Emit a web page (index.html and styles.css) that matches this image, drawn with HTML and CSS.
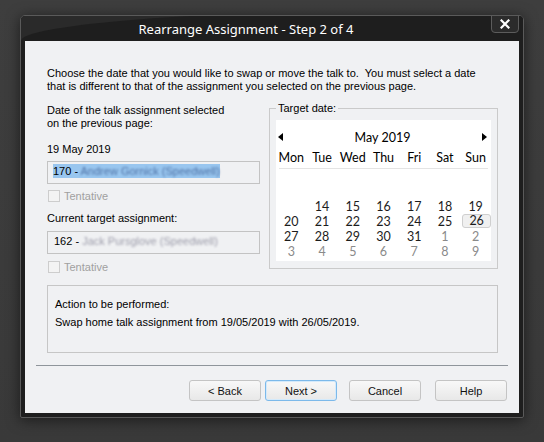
FILE: index.html
```html
<!DOCTYPE html>
<html lang="en">
<head>
    <meta charset="UTF-8">
    <title>Rearrange Assignment - Step 2 of 4</title>
    <link rel="stylesheet" href="styles.css">
</head>
<body>
<div class="window">
    <div class="titlebar">
        <span class="title">Rearrange Assignment - Step 2 of 4</span>
        <button class="close" title="Close">
            <svg width="10" height="10" viewBox="0 0 10 10"><path d="M1.5 1.5 L8.5 8.5 M8.5 1.5 L1.5 8.5" stroke="#fff" stroke-width="2.2" stroke-linecap="square"/></svg>
        </button>
    </div>

    <div class="client">
        <p class="intro">Choose the date that you would like to swap or move the talk to.&nbsp; You must select a date<br>that is different to that of the assignment you selected on the previous page.</p>

        <div class="columns">
            <div class="left">
                <p class="label">Date of the talk assignment selected<br>on the previous page:</p>
                <p class="date">19 May 2019</p>
                <div class="textbox"><span class="sel">170 - <span class="blur blur-sel">Andrew Gornick (Speedwell)</span></span></div>
                <label class="check"><span class="box"></span>Tentative</label>

                <p class="label label-target">Current target assignment:</p>
                <div class="textbox textbox-target">162 - <span class="blur">Jack Pursglove (Speedwell)</span></div>
                <label class="check check-target"><span class="box"></span>Tentative</label>
            </div>

            <fieldset class="group">
                <legend>Target date:</legend>
                <div class="calendar">
                    <div class="cal-head">
                        <svg class="arrow" width="5" height="8" viewBox="0 0 5 8"><polygon points="5,0 5,8 0,4" fill="#000"/></svg>
                        <span class="month">May 2019</span>
                        <svg class="arrow" width="5" height="8" viewBox="0 0 5 8"><polygon points="0,0 0,8 5,4" fill="#000"/></svg>
                    </div>
                    <div class="cal-days">
                        <span>Mon</span><span>Tue</span><span>Wed</span><span>Thu</span><span>Fri</span><span>Sat</span><span>Sun</span>
                    </div>
                    <div class="cal-grid" id="calGrid"></div>
                </div>
            </fieldset>
        </div>

        <div class="action">
            <p>Action to be performed:</p>
            <p>Swap home talk assignment from 19/05/2019 with 26/05/2019.</p>
        </div>

        <div class="footer">
            <div class="buttons">
                <button class="btn">&lt; Back</button>
                <button class="btn btn-default">Next &gt;</button>
                <button class="btn btn-cancel">Cancel</button>
                <button class="btn btn-help">Help</button>
            </div>
        </div>
    </div>
</div>

<script>
    // May 2019 calendar, earlier dates are hidden
    const grid = document.getElementById('calGrid');
    const cells = [];
    for (let i = 0; i < 15; i++) cells.push({ text: '' });
    for (let d = 14; d <= 31; d++) cells.push({ text: d, cls: d === 26 ? 'selected' : '' });
    for (let d = 1; d <= 9; d++) cells.push({ text: d, cls: 'other' });

    cells.forEach(c => {
        const cell = document.createElement('span');
        cell.className = 'day ' + (c.cls || '');
        cell.innerHTML = c.text === '' ? '' : '<span>' + c.text + '</span>';
        grid.appendChild(cell);
    });
</script>
</body>
</html>
```

FILE: styles.css
```css
* {
    box-sizing: border-box;
}

body {
    margin: 0;
    width: 544px;
    height: 442px;
    overflow: hidden;
    background: linear-gradient(180deg, #3e3e3e, #393939);
    font-family: 'Liberation Sans', Arial, sans-serif;
    font-size: 11px;
    color: #000;
}

p {
    margin: 0;
    line-height: 13px;
}

.window {
    margin: 15px 0 0 20px;
    width: 504px;
    height: 403px;
    border: 1px solid #5a5a5a;
    border-radius: 5px 5px 2px 2px;
    background: #1e1e1e;
    padding: 0 4px 4px 4px;
    box-shadow: 0 2px 14px rgba(0, 0, 0, 0.55);
}

.titlebar {
    position: relative;
    display: flex;
    align-items: flex-start;
    height: 25px;
    margin: 0 -4px;
    overflow: hidden;
    border-radius: 4px 4px 0 0;
    background: #2a2a2a;
}

.titlebar::before {
    content: '';
    position: absolute;
    left: 0;
    top: -7px;
    width: 900px;
    height: 64px;
    border-radius: 50%;
    background: #1e1e1e;
}

.title {
    position: relative;
    flex: 1;
    text-align: center;
    padding-right: 20px;
    line-height: 26px;
    color: #fff;
    font-family: 'Noto Sans', 'Open Sans', sans-serif;
    font-size: 13px;
}

.close {
    position: relative;
    width: 28px;
    height: 18px;
    margin: -1px 4px 0 0;
    padding: 0;
    border: 1px solid #5c5c5c;
    border-radius: 0 0 4px 4px;
    background: #2b2b2b;
    display: flex;
    align-items: center;
    justify-content: center;
}

.client {
    height: 372px;
    background: #f0f1f3;
    padding: 26px 20px 0 22px;
}

.columns {
    display: flex;
    align-items: flex-start;
    gap: 9px;
    margin-top: 9px;
}

.left {
    width: 213px;
    padding-top: 2px;
}

.date {
    margin-top: 13px;
}

.textbox {
    height: 23px;
    margin-top: 5px;
    border: 1px solid #c3c3c3;
    padding: 2px 0 0 5px;
    line-height: 14px;
    white-space: nowrap;
    overflow: hidden;
}

.sel {
    display: inline-block;
    background: #99c6ef;
    line-height: 14px;
}

.blur {
    color: #9c9caa;
    filter: blur(1.3px);
}

.blur-sel {
    color: #4f72a6;
}

.check {
    display: flex;
    align-items: center;
    gap: 4px;
    height: 13px;
    margin-top: 5px;
    padding-left: 1px;
    color: #a0a0a0;
}

.box {
    width: 12px;
    height: 12px;
    border: 1px solid #cdcdcd;
    background: #f3f3f3;
}

.label-target {
    margin-top: 10px;
}

.textbox-target {
    margin-top: 6px;
    padding-left: 6px;
}

.check-target {
    margin-top: 6px;
}

.group {
    width: 229px;
    margin: 0;
    padding: 0 6px 7px 6px;
    border: 1px solid #cacaca;
}

.group legend {
    padding: 0 2px;
    line-height: 13px;
}

.calendar {
    height: 141px;
    margin-top: 5px;
    background: #fff;
    font-family: Lato, 'Noto Sans', sans-serif;
    font-size: 12.5px;
}

.cal-head {
    display: flex;
    align-items: center;
    justify-content: space-between;
    height: 29px;
    padding: 5px 4px 0 2px;
}

.month {
    line-height: 15px;
}

.cal-days {
    display: grid;
    grid-template-columns: repeat(7, 1fr);
    height: 20px;
    line-height: 18px;
    text-align: center;
    background: linear-gradient(#e4e4e4, #e4e4e4) no-repeat center bottom / calc(100% - 6px) 1px;
}

.cal-grid {
    display: grid;
    grid-template-columns: repeat(7, 1fr);
    grid-auto-rows: 15px;
    text-align: center;
    line-height: 15px;
}

.day {
    display: flex;
    justify-content: center;
    color: #1c1c1c;
}

.day.other {
    color: #8a8a8a;
}

.day.selected {
    padding: 0 0 0 2px;
}

.day.selected span {
    display: block;
    width: 100%;
    height: 14px;
    line-height: 12px;
    border: 1px solid #cfcfcf;
    border-radius: 3px;
    background: #f0f0f0;
}

.action {
    height: 68px;
    margin-top: 12px;
    margin-right: 1px;
    border: 1px solid #c6c6c6;
    padding: 12px 0 0 7px;
}

.action p + p {
    margin-top: 5px;
}

.footer {
    margin: 12px -9px 0 -11px;
    border-top: 1px solid #8f959b;
    padding-top: 14px;
}

.buttons {
    display: flex;
    justify-content: flex-end;
    gap: 4px;
    padding-right: 1px;
}

.btn {
    width: 72px;
    height: 21px;
    padding: 0;
    border: 1px solid #c4c4c4;
    border-radius: 3px;
    background: linear-gradient(180deg, #f8f8f8, #e8e8e8);
    font-family: 'Liberation Sans', Arial, sans-serif;
    font-size: 11px;
    color: #111;
}

.btn-default {
    border-color: #7cb9ea;
    box-shadow: inset 0 0 0 1px #d4eafb;
}

.btn-cancel {
    margin-left: 8px;
}

.btn-help {
    margin-left: 10px;
}
```
